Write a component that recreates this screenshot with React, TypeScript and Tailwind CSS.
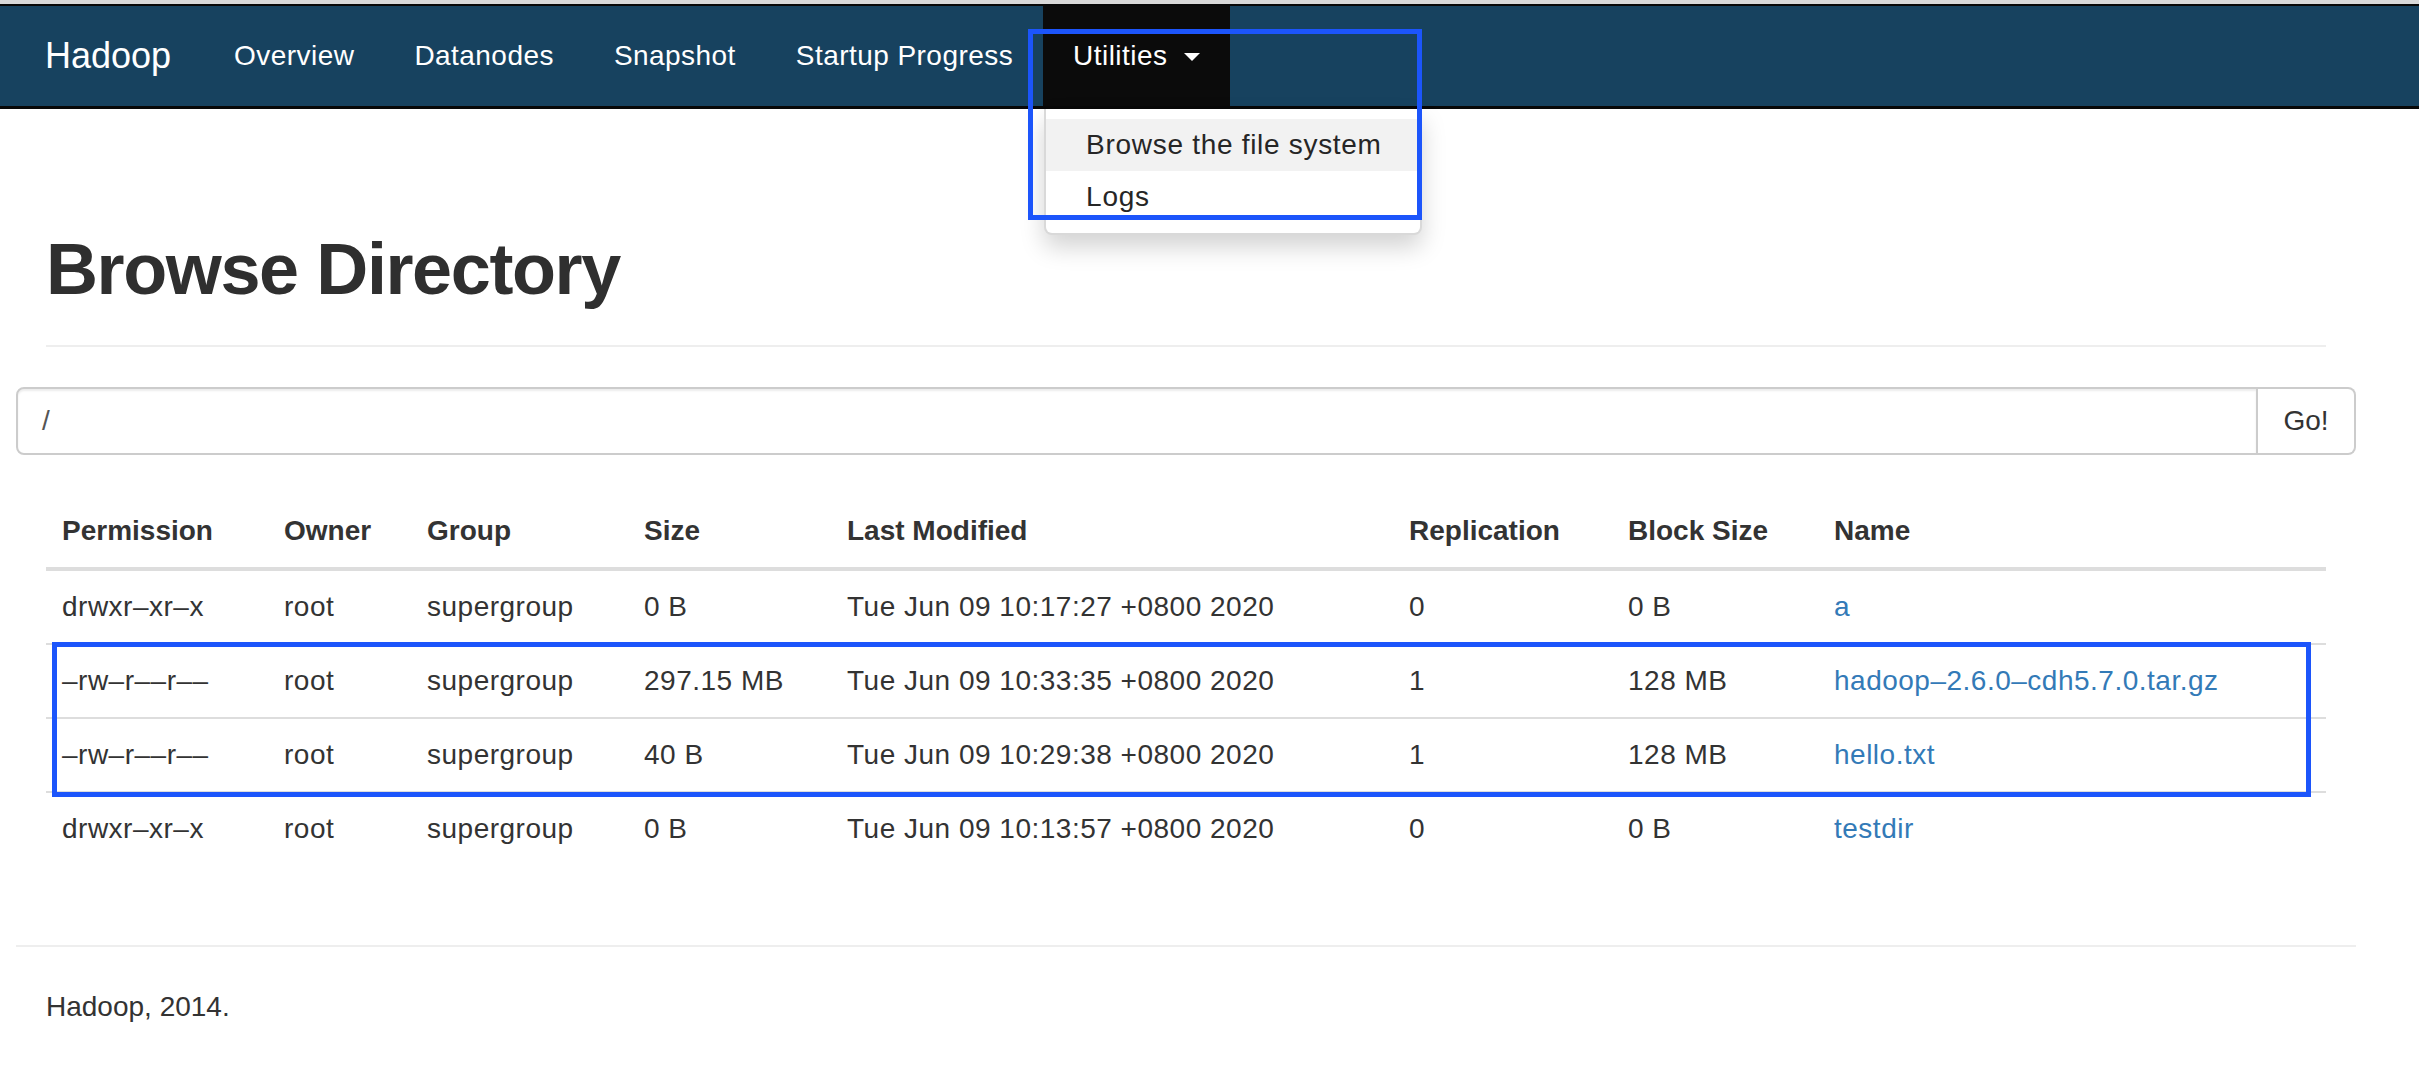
import React from "react";

const navItems = ["Overview", "Datanodes", "Snapshot", "Startup Progress"];

const columns = [
  { label: "Permission", width: "w-[222px]" },
  { label: "Owner", width: "w-[143px]" },
  { label: "Group", width: "w-[217px]" },
  { label: "Size", width: "w-[203px]" },
  { label: "Last Modified", width: "w-[562px]" },
  { label: "Replication", width: "w-[219px]" },
  { label: "Block Size", width: "w-[206px]" },
  { label: "Name", width: "w-[508px]" },
];

const files = [
  { perm: "drwxr–xr–x", owner: "root", group: "supergroup", size: "0 B", modified: "Tue Jun 09 10:17:27 +0800 2020", repl: "0", block: "0 B", name: "a" },
  { perm: "–rw–r––r––", owner: "root", group: "supergroup", size: "297.15 MB", modified: "Tue Jun 09 10:33:35 +0800 2020", repl: "1", block: "128 MB", name: "hadoop–2.6.0–cdh5.7.0.tar.gz" },
  { perm: "–rw–r––r––", owner: "root", group: "supergroup", size: "40 B", modified: "Tue Jun 09 10:29:38 +0800 2020", repl: "1", block: "128 MB", name: "hello.txt" },
  { perm: "drwxr–xr–x", owner: "root", group: "supergroup", size: "0 B", modified: "Tue Jun 09 10:13:57 +0800 2020", repl: "0", block: "0 B", name: "testdir" },
];

function Navbar() {
  return (
    <nav className="h-[105px] border-t-2 border-b-[3px] border-[#080808] bg-[#17425f]">
      <div className="flex h-full pl-[15px]">
        <a className="flex items-center pl-[30px] pr-[33px] text-[36px] text-white">Hadoop</a>
        <ul className="flex tracking-[0.45px]">
          {navItems.map((item) => (
            <li key={item}>
              <a className="flex h-full items-center whitespace-nowrap px-[30px] text-white">{item}</a>
            </li>
          ))}
          <li className="relative bg-[#0b0b0b]">
            <a className="flex h-full items-center px-[30px] text-white">
              Utilities
              <span className="ml-[17px] mt-[2px] h-0 w-0 border-x-[8px] border-t-[8px] border-x-transparent border-t-white" />
            </a>
            <ul className="absolute left-[1px] top-[103px] z-10 w-[378px] whitespace-nowrap rounded-b-[8px] border-2 border-t-0 border-[rgba(0,0,0,0.15)] bg-white py-[10px] tracking-[0.7px] shadow-[0_12px_24px_rgba(0,0,0,0.175)]">
              <li className="bg-[#f2f2f2] px-[40px] py-[6px] text-[#262626]">Browse the file system</li>
              <li className="px-[40px] py-[6px] text-[#262626]">Logs</li>
            </ul>
          </li>
        </ul>
      </div>
    </nav>
  );
}

export default function App() {
  return (
    <div className="relative min-h-screen bg-white font-['Liberation_Sans',Arial,sans-serif] text-[28px] leading-[40px] text-[#333]">
      <div className="h-[4px] bg-[#d9d9d9]" />
      <Navbar />

      <div className="ml-[16px] w-[2340px]">
        <div className="px-[30px]">
          <div className="mt-[121px] border-b-2 border-[#eeeeee] pb-[36px]">
            <h1 className="text-[72px] font-bold leading-[79px] tracking-[-1.4px] text-[#2f2f2f]">Browse Directory</h1>
          </div>
        </div>

        <div className="mt-[40px] flex h-[68px]">
          <div className="flex flex-1 items-center rounded-l-[8px] border-2 border-[#cccccc] px-[24px] text-[#555] shadow-[inset_0_2px_2px_rgba(0,0,0,0.075)]">/</div>
          <button className="w-[98px] rounded-r-[8px] border-2 border-l-0 border-[#cccccc] bg-white text-[#333]">Go!</button>
        </div>

        <div className="mt-[40px] px-[30px]">
          <table className="w-full table-fixed border-separate border-spacing-0">
            <thead>
              <tr>
                {columns.map((c) => (
                  <th key={c.label} className={`${c.width} border-b-4 border-[#dddddd] p-[16px] text-left font-bold`}>
                    {c.label}
                  </th>
                ))}
              </tr>
            </thead>
            <tbody className="tracking-[0.5px]">
              {files.map((f, i) => {
                const td = i === 0 ? "p-[16px]" : "border-t-2 border-[#dddddd] p-[16px]";
                return (
                  <tr key={f.name}>
                    <td className={td}>{f.perm}</td>
                    <td className={td}>{f.owner}</td>
                    <td className={td}>{f.group}</td>
                    <td className={td}>{f.size}</td>
                    <td className={td}>{f.modified}</td>
                    <td className={td}>{f.repl}</td>
                    <td className={td}>{f.block}</td>
                    <td className={td}>
                      <a className="text-[#337ab7]">{f.name}</a>
                    </td>
                  </tr>
                );
              })}
            </tbody>
          </table>
        </div>

        <hr className="mt-[80px] border-t-2 border-[#eeeeee]" />
        <footer className="mt-[40px] px-[30px] pb-[40px]">Hadoop, 2014.</footer>
      </div>

      {/* annotation boxes drawn over the screenshot */}
      <div className="pointer-events-none absolute left-[1028px] top-[29px] z-20 h-[191px] w-[394px] border-[5px] border-[#1c55fb]" />
      <div className="pointer-events-none absolute left-[52px] top-[642px] z-20 h-[155px] w-[2259px] border-[5px] border-[#1c55fb]" />
    </div>
  );
}
